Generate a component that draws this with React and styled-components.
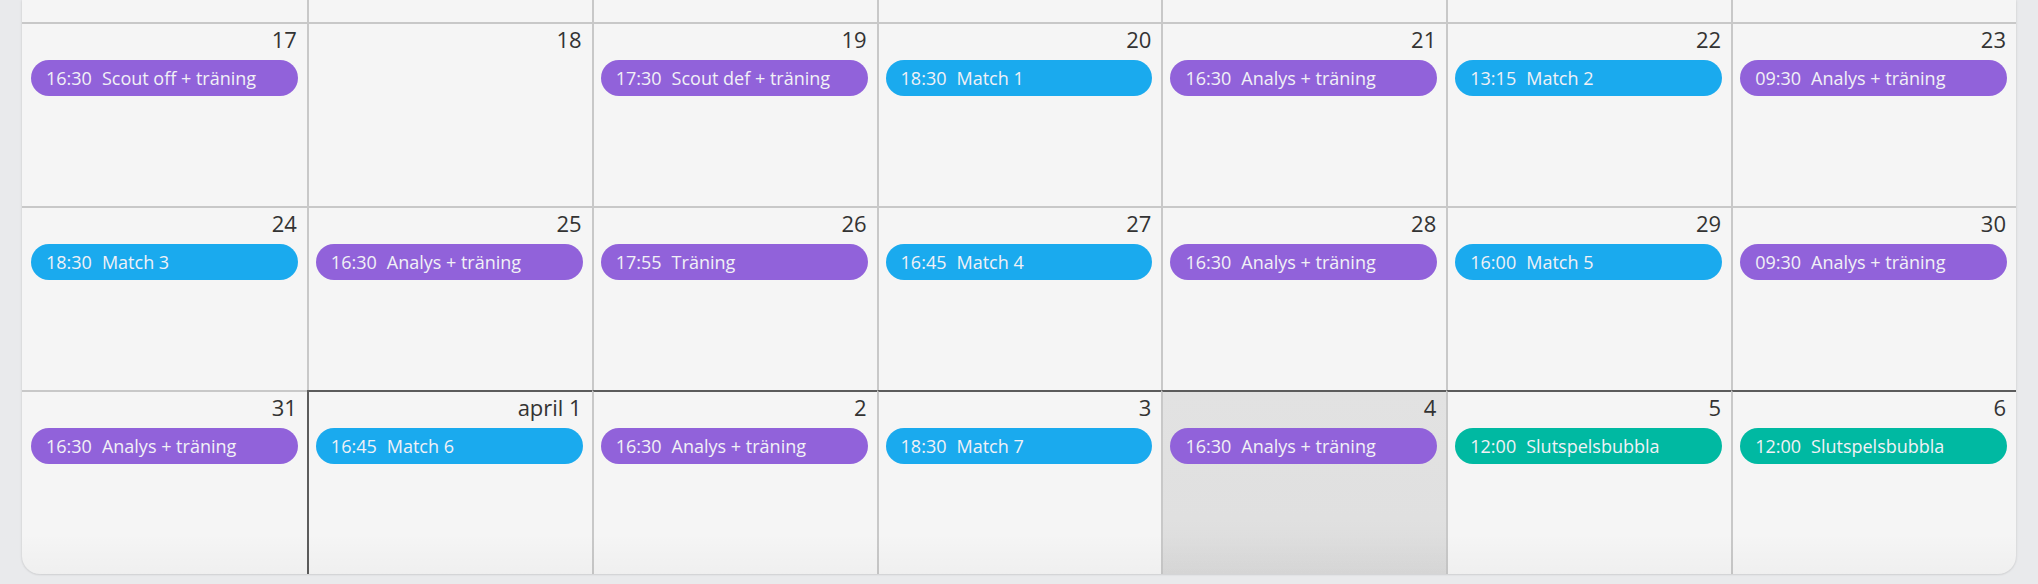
import React from "react";
import styled, { createGlobalStyle, css } from "styled-components";

const GlobalStyle = createGlobalStyle`
  html, body {
    margin: 0;
    padding: 0;
    background: #e9eaec;
    overflow: hidden;
    font-family: "Open Sans", "Noto Sans", sans-serif;
  }
  #root { width: 2038px; height: 584px; overflow: hidden; }
`;

const COLORS = {
  purple: "#9162da",
  blue: "#1aaaee",
  teal: "#00b9a2",
};

const Page = styled.div`
  width: 2038px;
  height: 584px;
  padding: 0 22px;
  box-sizing: border-box;
  overflow: hidden;
`;

const Card = styled.div`
  position: relative;
  background: #f5f5f5;
  border-radius: 0 0 18px 18px;
  box-shadow: 0 0 3px rgba(0, 0, 0, 0.12), 0 1px 2px rgba(0, 0, 0, 0.06);
  overflow: hidden;
  &::after {
    content: "";
    position: absolute;
    left: 0;
    right: 0;
    bottom: 0;
    height: 40px;
    background: linear-gradient(to bottom, rgba(0, 0, 0, 0), rgba(0, 0, 0, 0.025));
    pointer-events: none;
  }
`;

const Week = styled.div`
  display: grid;
  grid-template-columns: repeat(7, 1fr);
  height: ${(p) => p.$height}px;
`;

const Cell = styled.div`
  box-sizing: border-box;
  display: flex;
  flex-direction: column;
  min-width: 0;
  padding: 0 9px 0 ${(p) => (p.$first ? 9 : 7)}px;
  border-top: ${(p) =>
    p.$noTop ? "none" : `2px solid ${p.$darkTop ? "#5c5c5c" : "#c8c8c8"}`};
  border-left: ${(p) =>
    p.$first ? "none" : `2px solid ${p.$darkLeft ? "#5c5c5c" : "#c8c8c8"}`};
  ${(p) =>
    p.$today &&
    css`
      background: linear-gradient(to bottom, #e2e2e2 0%, #e0e0e0 70%, #dadada 100%);
    `}
`;

const DayNumber = styled.div`
  font-size: 22px;
  line-height: 30px;
  color: #333;
  text-align: right;
  padding-right: 1px;
`;

const EventPill = styled.div`
  margin-top: 6px;
  height: 36px;
  box-sizing: border-box;
  display: flex;
  align-items: center;
  gap: 10px;
  padding: 0 15px;
  border-radius: 18px;
  background: ${(p) => COLORS[p.$kind]};
  color: #f1f1f6;
  font-size: 18px;
  white-space: nowrap;
  overflow: hidden;
`;

const Time = styled.span``;
const Title = styled.span``;

const weeks = [
  [
    { d: "17", e: ["16:30", "Scout off + träning", "purple"] },
    { d: "18" },
    { d: "19", e: ["17:30", "Scout def + träning", "purple"] },
    { d: "20", e: ["18:30", "Match 1", "blue"] },
    { d: "21", e: ["16:30", "Analys + träning", "purple"] },
    { d: "22", e: ["13:15", "Match 2", "blue"] },
    { d: "23", e: ["09:30", "Analys + träning", "purple"] },
  ],
  [
    { d: "24", e: ["18:30", "Match 3", "blue"] },
    { d: "25", e: ["16:30", "Analys + träning", "purple"] },
    { d: "26", e: ["17:55", "Träning", "purple"] },
    { d: "27", e: ["16:45", "Match 4", "blue"] },
    { d: "28", e: ["16:30", "Analys + träning", "purple"] },
    { d: "29", e: ["16:00", "Match 5", "blue"] },
    { d: "30", e: ["09:30", "Analys + träning", "purple"] },
  ],
  [
    { d: "31", e: ["16:30", "Analys + träning", "purple"] },
    { d: "april 1", e: ["16:45", "Match 6", "blue"], newMonth: true, monthStart: true },
    { d: "2", e: ["16:30", "Analys + träning", "purple"], newMonth: true },
    { d: "3", e: ["18:30", "Match 7", "blue"], newMonth: true },
    { d: "4", e: ["16:30", "Analys + träning", "purple"], newMonth: true, today: true },
    { d: "5", e: ["12:00", "Slutspelsbubbla", "teal"], newMonth: true },
    { d: "6", e: ["12:00", "Slutspelsbubbla", "teal"], newMonth: true },
  ],
];

export default function App() {
  return (
    <>
      <GlobalStyle />
      <Page>
        <Card>
          {/* tail of the previous week, scrolled almost out of view */}
          <Week $height={22}>
            {Array.from({ length: 7 }).map((_, i) => (
              <Cell key={i} $first={i === 0} $noTop />
            ))}
          </Week>
          {weeks.map((week, wi) => (
            <Week key={wi} $height={184}>
              {week.map((day, di) => (
                <Cell
                  key={di}
                  $first={di === 0}
                  $darkTop={day.newMonth}
                  $darkLeft={day.monthStart}
                  $today={day.today}
                >
                  <DayNumber>{day.d}</DayNumber>
                  {day.e && (
                    <EventPill $kind={day.e[2]}>
                      <Time>{day.e[0]}</Time>
                      <Title>{day.e[1]}</Title>
                    </EventPill>
                  )}
                </Cell>
              ))}
            </Week>
          ))}
        </Card>
      </Page>
    </>
  );
}
